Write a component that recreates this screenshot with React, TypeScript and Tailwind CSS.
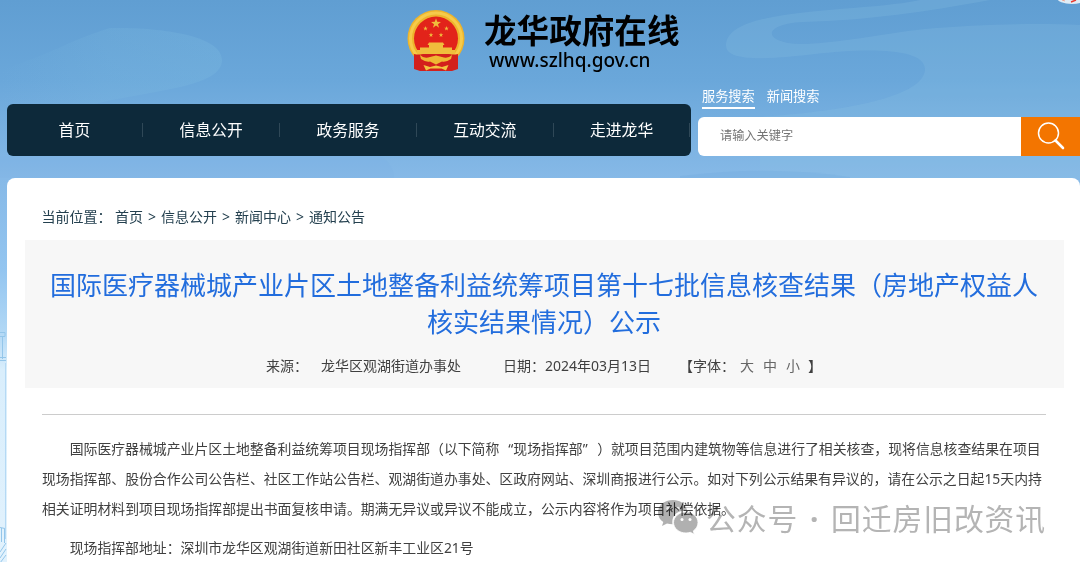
import React from 'react';

const navItems = ['首页', '信息公开', '政务服务', '互动交流', '走进龙华'];
const crumbs = ['首页', '信息公开', '新闻中心', '通知公告'];

const STAR = '0,-1 0.235,-0.324 0.951,-0.309 0.38,0.124 0.588,0.809 0,0.4 -0.588,0.809 -0.38,0.124 -0.951,-0.309 -0.235,-0.324';

const Emblem: React.FC = () => (
  <svg className="w-[58px] h-[62px] shrink-0" viewBox="0 0 58 62">
    <circle cx="29" cy="28.5" r="28.5" fill="#eeb42c" />
    <circle cx="29" cy="28.5" r="25.5" fill="none" stroke="#f6cb4a" strokeWidth="3" />
    <circle cx="29" cy="28.5" r="22" fill="#e2231a" />
    <g fill="#f0bd3c">
      <polygon points={STAR} transform="translate(29 13.5) scale(5.2)" />
      <polygon points={STAR} transform="translate(18.5 18.5) scale(2.4)" />
      <polygon points={STAR} transform="translate(39.5 18.5) scale(2.4)" />
      <polygon points={STAR} transform="translate(24 25) scale(2.4)" />
      <polygon points={STAR} transform="translate(34 25) scale(2.4)" />
      <path d="M22 32.500h14l1.500 2.500h-1.500v2.500h9v4h-32v-4h9v-2.500h-1.500z" />
      <path d="M10 40h38v4.500H10z" />
    </g>
    <path d="M7 44 Q12 45 16 44 H42 Q46 45 51 44 L51 59 L45 61 H13 L7 59 Z" fill="#d3201c" />
    <path d="M13 45 Q17 49 23 47 L29 45.500 L35 47 Q41 49 45 45 L44 49 Q39 52.500 35 51.500 L29 54.500 L23 51.500 Q19 52.500 14 49 Z" fill="#efb833" />
    <path d="M16.500 55 L23 57 L29 55.500 L35 57 L41.500 55 L39 60.500 L34.500 58.500 H23.500 L19 60.500 Z" fill="#f3c540" />
  </svg>
);

const Clouds: React.FC = () => (
  <svg className="absolute left-0 top-0 w-[1080px] h-[562px]" viewBox="0 0 1080 562" fill="none">
    <defs>
      <linearGradient id="cloudLeft" x1="0" y1="0" x2="1" y2="0">
        <stop offset="0" stopColor="#7dbbe0" stopOpacity="0" />
        <stop offset="0.5" stopColor="#7dbbe0" stopOpacity="0.22" />
        <stop offset="1" stopColor="#7dbbe0" stopOpacity="0.3" />
      </linearGradient>
    </defs>
    <path d="M0 70 C50 55 70 40 110 28 C150 27 222 33 222 60 C222 88 150 90 95 104 H0 Z" fill="url(#cloudLeft)" />
    <path d="M920 0 C860 13 725 6 726 46 C727 64 780 58 815 54 C860 49 926 46 925 70 C922 100 830 112 760 117 V178 H1080 V25 C1040 23 980 24 925 29 C880 34 835 44 800 44 C763 43 761 24 803 22 C870 20 925 12 990 0 Z" fill="#8ec6e4" fillOpacity="0.22" />
    <path d="M0 156 H380 Q394 164 394 178 H0 Z" fill="#76b0e2" fillOpacity="0.15" />
    <path d="M680 176 Q770 165 850 177 V180 H680 Z" fill="#6faadd" fillOpacity="0.3" />
    {/* pale buildings beside the card */}
    <g stroke="#94c6ea" strokeWidth="1">
      <path d="M0 332.500h5v4h-5M2.500 337v22M0 357.500h6M0 360.500h6" />
      <path d="M5.500 363v176" stroke="#b5d9f4" />
      <path d="M0 527.500l5 1M1.500 528v14M4.500 529v14M0 552l6-9M0 558l6-9M0 563l6-8" />
    </g>
  </svg>
);

const WeChatMark: React.FC = () => (
  <svg className="w-[42px] h-[36px]" viewBox="0 0 42 36">
    <path d="M16 1C7.200 1 1 6.500 1 13.500c0 4 2 7.300 5.300 9.600L5 27l5-2.500c2 .6 3.700.8 5.500.8-1.500-8.300 5-14.300 14.500-14.300C28.500 5 23 1 16 1z" fill="#b0b0b0" />
    <path d="M41 23.500C41 17.700 35.700 13 29 13s-12.500 4.700-12.500 10.500S22 34 29 34c1.500 0 3-.3 4.300-.7l4 2-1-3.400c3-2 4.700-5 4.700-8.400z" fill="#b0b0b0" stroke="#fff" strokeWidth="0.8" />
    <circle cx="11" cy="9.500" r="1.700" fill="#e8e8e8" />
    <circle cx="21" cy="9.500" r="1.700" fill="#e8e8e8" />
    <circle cx="25" cy="20.500" r="1.500" fill="#fff" />
    <circle cx="33" cy="20.500" r="1.500" fill="#fff" />
  </svg>
);

const App: React.FC = () => {
  return (
    <div className="relative w-[1080px] h-[562px] overflow-hidden bg-[linear-gradient(#609ed2_0px,#6aa7da_80px,#86b9e7_178px,#93c5f0_270px,#b0d7f5_330px,#d9eefc_370px,#e2f2fd_562px)] font-['Noto_Sans','Noto_Sans_CJK_SC',sans-serif]">
      <Clouds />
      <svg className="absolute right-0 top-0 w-[28px] h-[5px]" viewBox="0 0 28 5">
        <ellipse cx="20" cy="-2" rx="15" ry="6" fill="#fff" fillOpacity="0.8" />
        <path d="M10 0l3 1" stroke="#f3a58f" />
        <path d="M19 2l5-2" stroke="#e8392f" strokeWidth="1.500" />
      </svg>

      <div className="relative h-full flex flex-col">
        <header className="h-[177.500px] shrink-0 flex flex-col">
          <div className="h-[88px] pl-[407px] pt-[10px] flex items-start">
            <Emblem />
            <div className="ml-[19px] text-black whitespace-nowrap">
              <div className="text-[32.600px] leading-[41px] font-bold">龙华政府在线</div>
              <div className="pl-[5px] text-[19px] leading-[18px] font-medium">www.szlhq.gov.cn</div>
            </div>
          </div>
          <div className="flex pl-[6.500px]">
            <nav className="mt-4 w-[684px] h-[51.500px] rounded-md bg-[#0d293a] flex items-center text-white text-[15.800px]">
              {navItems.map(item => (
                <a key={item} className="w-[136.800px] h-[14px] pt-[2px] flex items-center justify-center border-r border-[#2f4857]">{item}</a>
              ))}
            </nav>
            <div className="ml-[7.500px] flex-1">
              <div className="h-[29px] pl-1 flex gap-[12px] text-white text-[13.200px] leading-[17px] whitespace-nowrap">
                <span className="h-[21px] border-b-2 border-white">服务搜索</span>
                <span>新闻搜索</span>
              </div>
              <div className="h-[38.500px] flex">
                <div className="w-[323px] bg-white rounded-l-md pl-[22px] flex items-center text-[12.200px] text-[#757575]">请输入关键字</div>
                <button className="flex-1 bg-[#f37500] flex items-center justify-center">
                  <svg className="w-7 h-7" viewBox="0 0 28 28" fill="none" stroke="#fff">
                    <circle cx="11.500" cy="11" r="10" strokeWidth="1.500" />
                    <path d="M18.500 18.500L26 26" strokeWidth="2.600" strokeLinecap="round" />
                  </svg>
                </button>
              </div>
            </div>
          </div>
        </header>

        <main className="ml-[6.500px] flex-1 bg-white rounded-t-lg text-[#404040] whitespace-nowrap">
          <div className="h-[62.500px] pt-[29.500px] pl-[35px] flex text-[14px] leading-[20px] text-[#24404f]">
            <span className="w-[73.500px]">当前位置：</span>
            {crumbs.map((c, i) => (
              <span key={c} className="flex">
                {i > 0 && <span className="w-[18px] text-center">&gt;</span>}
                {c}
              </span>
            ))}
          </div>

          <section className="ml-[18px] w-[1039px] h-[148px] bg-[#f7f7f7] pt-[27px]">
            <h1 className="text-[26px] leading-[36.500px] text-[#226ddd] text-center">
              国际医疗器械城产业片区土地整备利益统筹项目第十七批信息核查结果（房地产权益人
              <br />
              核实结果情况）公示
            </h1>
            <div className="mt-[16px] pl-[241.500px] flex text-[14px] leading-[20px]">
              <span className="w-[55px]">来源：</span>
              <span className="w-[182px]">龙华区观湖街道办事处</span>
              <span className="w-[176px]">日期：2024年03月13日</span>
              <span className="w-[61px]">【字体：</span>
              <span className="flex gap-[9px] text-[#666]">
                <span>大</span>
                <span>中</span>
                <span>小</span>
              </span>
              <span className="ml-[8px]">】</span>
            </div>
          </section>

          <article className="ml-[35.500px] w-[1004px] mt-[26px] pt-[18.500px] border-t border-[#ccc] text-[13.860px] leading-[30.200px]">
            <p className="indent-[27.700px]">
              国际医疗器械城产业片区土地整备利益统筹项目现场指挥部（以下简称
              <span className="inline-flex justify-end w-[14px] indent-0">“</span>
              现场指挥部
              <span className="inline-flex w-[14.500px] indent-0">”</span>
              ）就项目范围内建筑物等信息进行了相关核查，现将信息核查结果在项目
              <br />
              现场指挥部、股份合作公司公告栏、社区工作站公告栏、观湖街道办事处、区政府网站、深圳商报进行公示。如对下列公示结果有异议的，请在公示之日起15天内持
              <br />
              相关证明材料到项目现场指挥部提出书面复核申请。期满无异议或异议不能成立，公示内容将作为项目补偿依据。
            </p>
            <p className="mt-[8.500px] indent-[27.700px]">现场指挥部地址：深圳市龙华区观湖街道新田社区新丰工业区21号</p>
          </article>
        </main>
      </div>

      <div className="absolute left-[657px] top-[499px] flex items-start mix-blend-multiply">
        <WeChatMark />
        <div className="ml-[7px] text-[29.800px] leading-[40px] tracking-[0.900px] text-[#b4b4b4] whitespace-nowrap flex">
          <span>公众号</span>
          <span className="w-[33px] text-center font-bold">·</span>
          <span>回迁房旧改资讯</span>
        </div>
      </div>
    </div>
  );
};

export default App;
